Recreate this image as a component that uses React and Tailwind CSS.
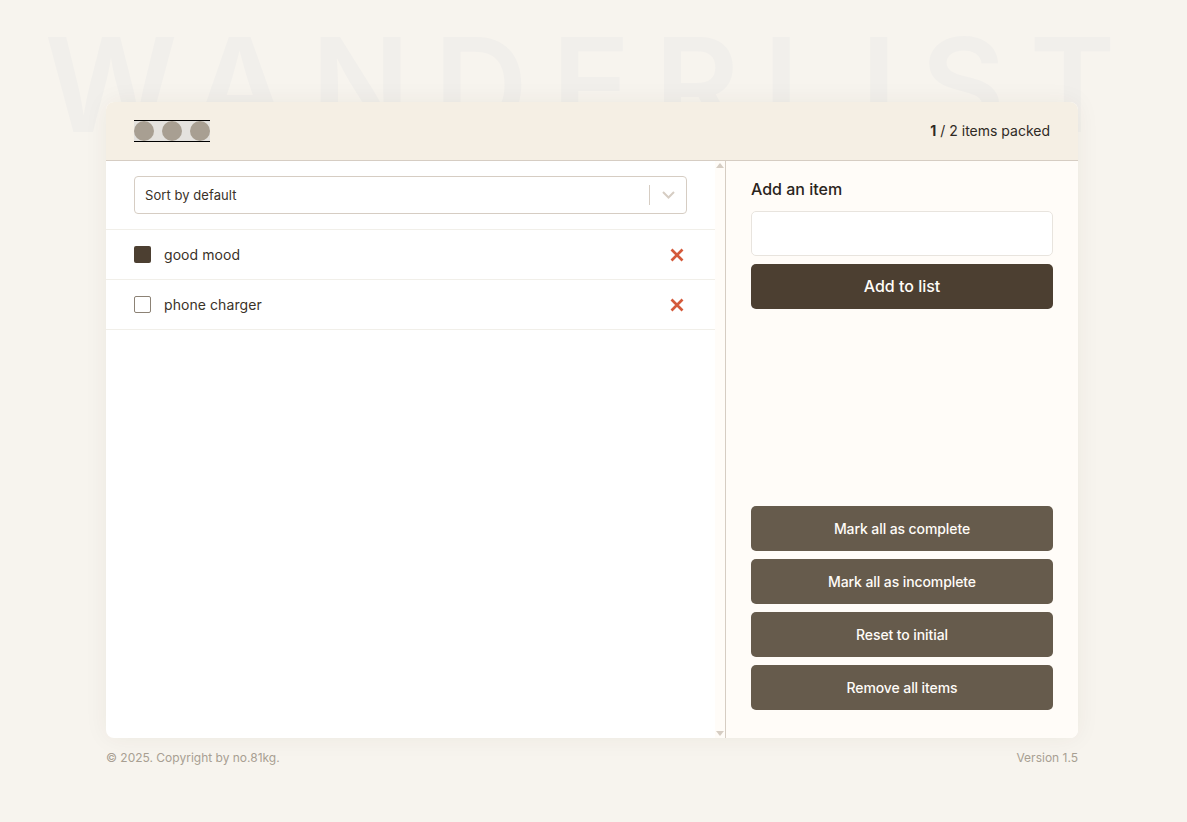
import React from "react";

const font = { fontFamily: '"Inter", "Liberation Sans", sans-serif' };

function Row({ label, checked }) {
  return (
    <li className="flex h-[50px] items-center border-b border-[#f1efe9] pl-7 pr-[28px]">
      <span
        className={
          checked
            ? "h-[17px] w-[17px] rounded-[2px] bg-[#4c3f31]"
            : "h-[17px] w-[17px] rounded-[2px] border border-[#8c8275] bg-white"
        }
      />
      <span className="ml-[13px] flex-1 text-[14px] tracking-[0.07px] text-[#3a3228]">{label}</span>
      <svg width="20" height="20" viewBox="0 0 20 20" className="text-[#d4593a]">
        <path d="M4.500 4.500 L15.500 15.500 M15.500 4.500 L4.500 15.500" stroke="currentColor" strokeWidth="2.700" />
      </svg>
    </li>
  );
}

function ActionButton({ children }) {
  return (
    <button className="h-[45px] w-full rounded-[5px] bg-[#665b4c] text-[14px] font-medium tracking-[-0.1px] text-[#fffcf8]">
      {children}
    </button>
  );
}

export default function App() {
  return (
    <div
      className="relative flex h-screen flex-col items-center overflow-hidden bg-[#f7f4ee] pr-[3px] pt-[102px]"
      style={font}
    >
      <div className="absolute left-0 right-[3px] top-[0px] whitespace-nowrap text-center text-[130px] font-semibold leading-[1.3] tracking-[24px] text-[#f1efeb]">
        WANDERLIST
      </div>

      <div className="relative flex h-[636px] w-[972px] flex-col overflow-hidden rounded-[8px] bg-white shadow-[0_0_24px_rgba(60,50,40,0.06)]">
        <header className="flex h-[59px] shrink-0 items-center justify-between border-b border-[#d6cdc3] bg-[#f5efe4] pb-[1px] pl-7 pr-7">
          <div className="flex gap-2 border-y border-black bg-[#e4e2de]">
            <span className="h-5 w-5 rounded-full bg-[#a89f92]" />
            <span className="h-5 w-5 rounded-full bg-[#a89f92]" />
            <span className="h-5 w-5 rounded-full bg-[#a89f92]" />
          </div>
          <p className="text-[14px] text-[#2f2a24]">
            <b className="font-bold">1</b> / 2 items packed
          </p>
        </header>

        <div className="flex min-h-0 flex-1">
          <section className="flex min-w-0 flex-1">
            <div className="min-w-0 flex-1">
              <div className="flex h-[69px] items-center border-b border-[#f1efe9] pl-7 pr-[28px]">
                <div className="flex h-[38px] flex-1 items-center rounded-[4px] border border-[#d6cdc3] bg-white pl-[10px]">
                  <span className="flex-1 pt-[1px] text-[13px] tracking-[0.005em] text-[#3a3228]">Sort by default</span>
                  <span className="h-[20px] w-px bg-[#d6cdc3]" />
                  <svg width="36" height="20" viewBox="0 0 36 20" className="text-[#d6cdc3]">
                    <path d="M13 7 L18.500 12.500 L24 7" fill="none" stroke="currentColor" strokeWidth="2" />
                  </svg>
                </div>
              </div>
              <ul>
                <Row label="good mood" checked />
                <Row label="phone charger" />
              </ul>
            </div>
            <div className="flex w-[10px] shrink-0 flex-col items-center justify-between bg-[#fffcf8] py-[2px]">
              <svg width="8" height="5" viewBox="0 0 8 5"><path d="M4 0 L8 5 L0 5 Z" fill="#d6cdc3" /></svg>
              <svg width="8" height="5" viewBox="0 0 8 5"><path d="M0 0 L8 0 L4 5 Z" fill="#d6cdc3" /></svg>
            </div>
          </section>

          <aside className="flex w-[353px] shrink-0 flex-col justify-between border-l border-[#d6cdc3] bg-[#fffcf8] pb-7 pl-[25px] pr-[25px] pt-[18px]">
            <form className="flex flex-col">
              <label className="text-[16px] font-medium leading-5 text-[#2a241d]">Add an item</label>
              <input className="mt-[12px] h-[45px] rounded-[5px] border border-[#e8e4de] bg-white" />
              <button type="button" className="mt-2 h-[45px] rounded-[5px] bg-[#4c3f31] pb-[2px] text-[16px] font-medium text-[#fffcf8]">
                Add to list
              </button>
            </form>
            <div className="flex flex-col gap-2">
              <ActionButton>Mark all as complete</ActionButton>
              <ActionButton>Mark all as incomplete</ActionButton>
              <ActionButton>Reset to initial</ActionButton>
              <ActionButton>Remove all items</ActionButton>
            </div>
          </aside>
        </div>
      </div>

      <footer className="relative mt-[12px] flex w-[972px] justify-between text-[12px] leading-[16px] text-[#a89f92]">
        <span>© 2025. Copyright by no.81kg.</span>
        <span>Version 1.5</span>
      </footer>
    </div>
  );
}
